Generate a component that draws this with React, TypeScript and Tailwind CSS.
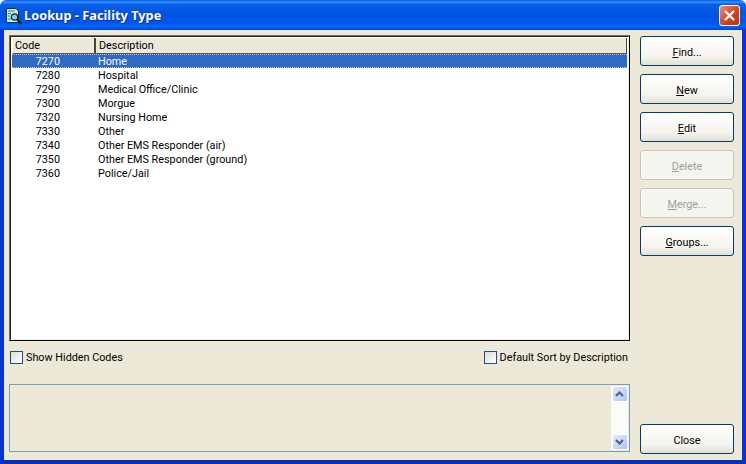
const rows = [
  ["7270", "Home"],
  ["7280", "Hospital"],
  ["7290", "Medical Office/Clinic"],
  ["7300", "Morgue"],
  ["7320", "Nursing Home"],
  ["7330", "Other"],
  ["7340", "Other EMS Responder (air)"],
  ["7350", "Other EMS Responder (ground)"],
  ["7360", "Police/Jail"],
];

function Btn({ pre = "", u = "", post = "", disabled = false }: { pre?: string; u?: string; post?: string; disabled?: boolean }) {
  return (
    <div
      className={
        "w-[94px] h-[30px] rounded-[3px] border flex items-center justify-center pt-[4px] " +
        (disabled
          ? "border-[#c9c7ba] bg-[#f4f4f0] text-[#a1a192]"
          : "border-[#003c74] bg-[linear-gradient(180deg,#ffffff_0%,#f5f4ee_70%,#e3e0d2_100%)] text-black")
      }
    >
      <span>
        {pre}
        <span className="underline">{u}</span>
        {post}
      </span>
    </div>
  );
}

function Check({ label }: { label: string }) {
  return (
    <div className="flex items-center gap-[3px]">
      <div className="w-[13px] h-[13px] border border-[#1c5180] bg-[linear-gradient(135deg,#dcdcd7,#ffffff)]" />
      <span className="mt-[2px]">{label}</span>
    </div>
  );
}

function ScrollBtn({ up }: { up: boolean }) {
  return (
    <div className="w-[16px] h-[16px] rounded-[2px] border border-white bg-[linear-gradient(135deg,#e1eafe,#aec8f7)] flex items-center justify-center">
      <svg width="9" height="6" viewBox="0 0 9 6">
        <path d={up ? "M1 5 L4.5 1.5 L8 5" : "M1 1 L4.5 4.5 L8 1"} fill="none" stroke="#4d6185" strokeWidth="2" />
      </svg>
    </div>
  );
}

export default function App() {
  return (
    <div className="w-[746px] h-[464px] flex flex-col overflow-hidden text-[10.8px] text-black font-['Roboto','Liberation_Sans',sans-serif] leading-none">
      <div className="h-[30px] shrink-0 flex items-center pl-[5px] pr-[6px] rounded-t-[6px] bg-[linear-gradient(180deg,#0058ee_0%,#3a93ff_7%,#0a5fe8_14%,#0054e3_45%,#0055eb_75%,#0066ff_88%,#0043cf_100%)]">
        <svg width="18" height="18" viewBox="0 0 18 18" className="shrink-0 mt-[1px]">
          <path d="M1.5 1.5 H11 L13.5 4 V15.5 H1.5 Z" fill="#c8f0ee" stroke="#08364a" />
          <path d="M3 4 H10 M3 6.5 H6 M3 9 H5 M3 12 H6" stroke="#158a96" />
          <circle cx="9.5" cy="10" r="3.2" fill="#7fd4dc" stroke="#102030" strokeWidth="1.2" />
          <path d="M12 12.5 L16.5 17" stroke="#111" strokeWidth="2" />
        </svg>
        <span className="ml-[1px] mt-[1px] text-white font-bold text-[12.8px] font-['Noto_Sans',sans-serif] [text-shadow:1px_1px_0_#0f2f8f]">Lookup - Facility Type</span>
        <div className="ml-auto w-[21px] h-[21px] rounded-[3px] border border-white bg-[linear-gradient(135deg,#e88e70,#d2401a_60%,#c03010)] flex items-center justify-center">
          <svg width="13" height="13" viewBox="0 0 13 13">
            <path d="M2 2 L11 11 M11 2 L2 11" stroke="#fff" strokeWidth="2.4" />
          </svg>
        </div>
      </div>
      <div className="flex-1 min-h-0 flex bg-[#ece9d8] border-x-[4px] border-b-[4px] border-[#0831d9] border-b-[#0a2fb8] pl-[5px] pr-[8px] pt-[5px] pb-[6px]">
        <div className="w-[621px] flex flex-col">
          <div className="h-[306px] shrink-0 border border-t-[#716f64] border-l-[#716f64] border-r-black border-b-black">
            <div className="h-full border border-t-[#222] border-l-[#222] border-r-[#f1efe2] border-b-[#f1efe2] bg-white pl-[1px] pr-[1px] flex flex-col">
              <div className="h-[17px] shrink-0 flex bg-[#ece9d8] border-t border-l border-white border-b border-b-[#555]">
                <div className="w-[83px] border-r-2 border-[#444] pl-[2px] pt-[2px] flex items-center">Code</div>
                <div className="flex-1 border-r border-[#444] pl-[3px] pt-[2px] flex items-center">Description</div>
              </div>
              {rows.map(([code, desc], i) => (
                <div
                  key={code}
                  className={
                    "h-[14px] shrink-0 flex items-center pt-[2px] " +
                    (i === 0 ? "bg-[#316ac5] text-white border-y border-dotted border-[#b8c6e0]" : "")
                  }
                >
                  <div className="w-[48px] text-right">{code}</div>
                  <div className="ml-[38px]">{desc}</div>
                </div>
              ))}
            </div>
          </div>
          <div className="h-[43px] shrink-0 flex items-start justify-between pt-[10px] pl-[1px] pr-[2px]">
            <Check label="Show Hidden Codes" />
            <Check label="Default Sort by Description" />
          </div>
          <div className="h-[68px] shrink-0 border border-[#7f9db9] flex justify-end pr-[1px] py-[1px]">
            <div className="w-[17px] flex flex-col justify-between bg-[#fbfbf8] items-center">
              <ScrollBtn up />
              <ScrollBtn up={false} />
            </div>
          </div>
        </div>
        <div className="flex-1 flex flex-col items-end">
          <div className="flex flex-col gap-[8px] pt-[1px]">
            <Btn u="F" post="ind..." />
            <Btn u="N" post="ew" />
            <Btn u="E" post="dit" />
            <Btn u="D" post="elete" disabled />
            <Btn u="M" post="erge..." disabled />
            <Btn u="G" post="roups..." />
          </div>
          <div className="mt-auto">
            <Btn pre="Close" />
          </div>
        </div>
      </div>
    </div>
  );
}
